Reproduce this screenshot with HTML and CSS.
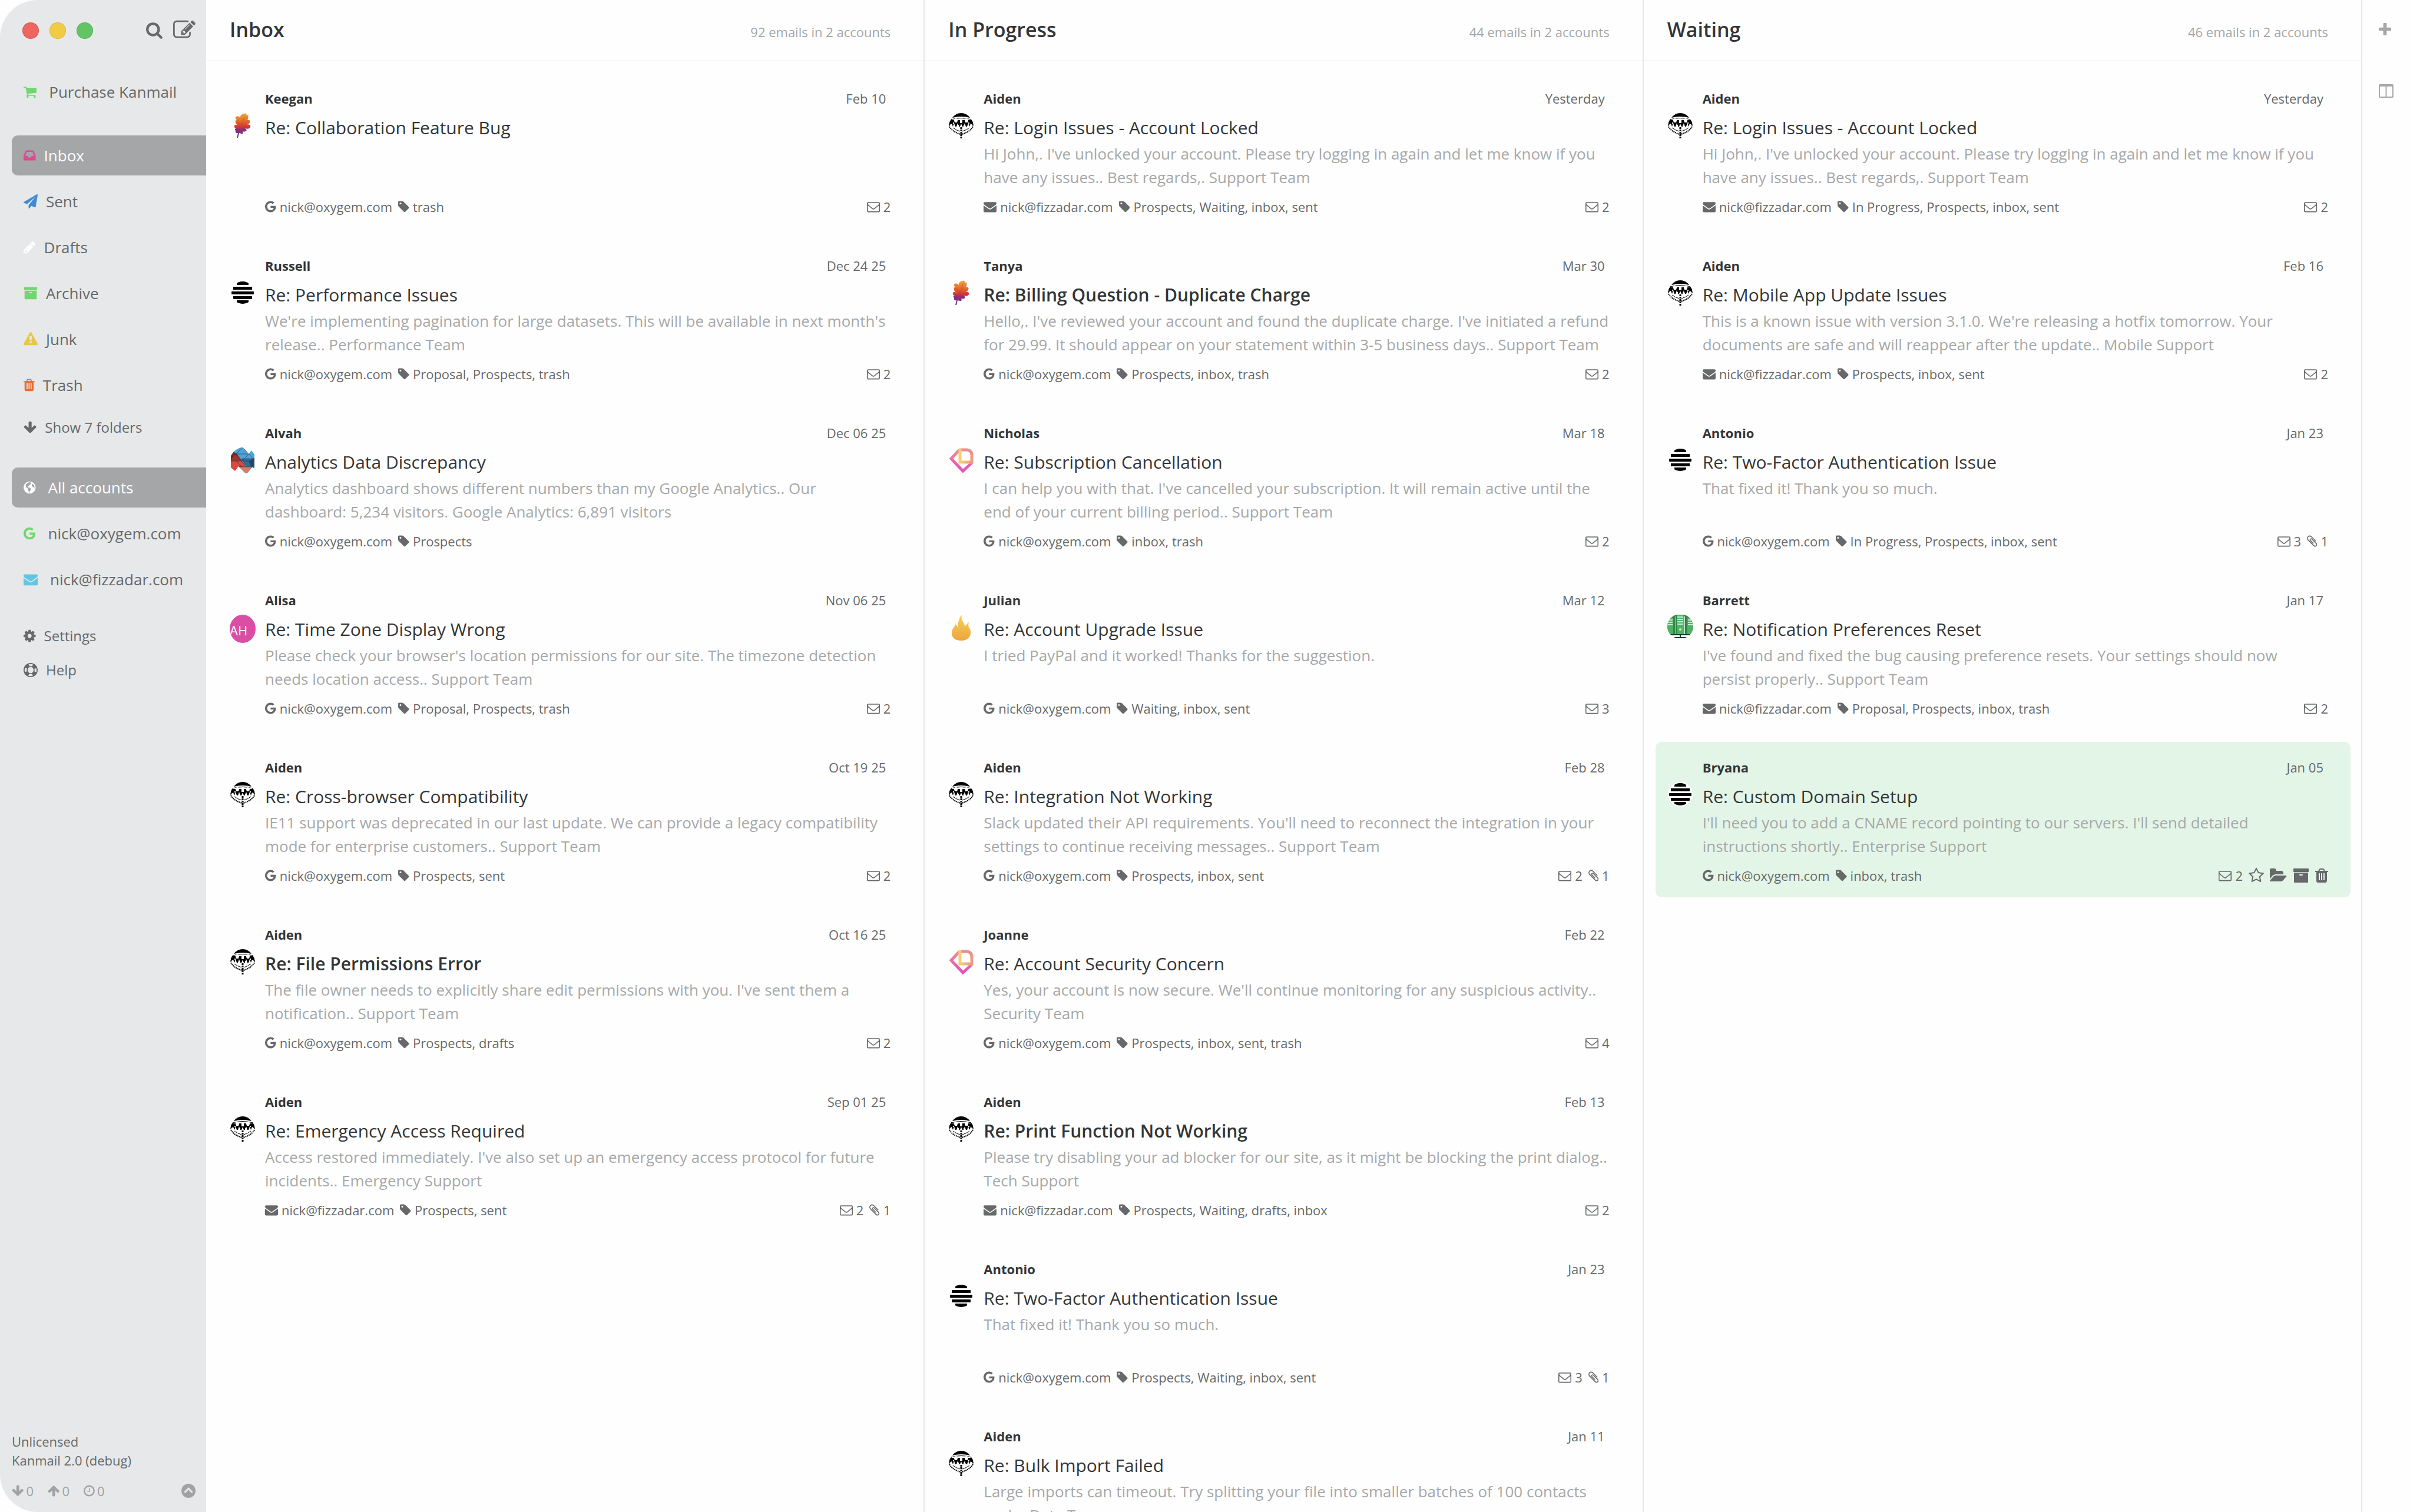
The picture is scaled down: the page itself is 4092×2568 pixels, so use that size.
FILE: index.html
```html
<!DOCTYPE html>
<html lang="en">
<head>
  <meta charset="UTF-8" />
  <meta name="viewport" content="width=device-width, initial-scale=1" />
  <title>Kanmail</title>
  <link rel="stylesheet" href="styles.css">
</head>
<body>
  <!-- Icon shapes, shared by the sidebar and the cards -->
  <svg class="sprite" aria-hidden="true">
    <defs>
      <path id="search" d="M1216 832q0-185-131.500-316.500t-316.500-131.500-316.500 131.500-131.500 316.500 131.500 316.500 316.500 131.500 316.500-131.500 131.500-316.500zm512 832q0 52-38 90t-90 38q-54 0-90-38l-343-342q-179 124-399 124-143 0-273.500-55.500t-225-150-150-225-55.500-273.500 55.500-273.500 150-225 225-150 273.500-55.500 273.500 55.500 225 150 150 225 55.500 273.500q0 220-124 399l343 343q37 37 37 90z"/>
      <path id="compose" d="M888 1184l116-116-152-152-116 116v56h96v96h56zm440-720q-16-16-33 1l-350 350q-17 17-1 33t33-1l350-350q17-17 1-33zm80 594v190q0 119-84.500 203.500t-203.500 84.500h-832q-119 0-203.500-84.500t-84.500-203.500v-832q0-119 84.500-203.500t203.500-84.500h832q63 0 117 25 15 7 18 23 3 17-9 29l-49 49q-14 14-32 8-23-6-45-6h-832q-66 0-113 47t-47 113v832q0 66 47 113t113 47h832q66 0 113-47t47-113v-126q0-13 9-22l64-64q15-15 35-7t20 29zm-96-738l288 288-672 672h-288v-288zm444 132l-92 92-288-288 92-92q28-28 68-28t68 28l152 152q28 28 28 68t-28 68z"/>
      <path id="cart" d="M704 1536q0 52-38 90t-90 38-90-38-38-90 38-90 90-38 90 38 38 90zm896 0q0 52-38 90t-90 38-90-38-38-90 38-90 90-38 90 38 38 90zm128-1088v512q0 24-16.500 42.500t-40.500 21.500l-1044 122q13 60 13 70 0 16-24 64h920q26 0 45 19t19 45-19 45-45 19h-1024q-26 0-45-19t-19-45q0-11 8-31.500t16-36 21.500-40 15.500-29.500l-177-823h-204q-26 0-45-19t-19-45 19-45 45-19h256q16 0 28.500 6.500t19.500 15.500 13 24.500 8 26 5.500 29.500 4.500 26h1201q26 0 45 19t19 45z"/>
      <path id="inbox" d="M1151 960h316q-1-3-2.500-8t-2.500-8l-212-496h-708l-212 496q-1 2-2.500 8t-2.500 8h316l95 192h320zm513 30v482q0 26-19 45t-45 19h-1408q-26 0-45-19t-19-45v-482q0-62 25-123l238-552q10-25 36.500-42t52.500-17h832q26 0 52.500 17t36.500 42l238 552q25 61 25 123z"/>
      <path id="plane" d="M1764 11q33 24 27 64l-256 1536q-5 29-32 45-14 8-31 8-11 0-24-5l-453-185-242 295q-18 23-49 23-13 0-22-4-19-7-30.500-23.500t-11.500-36.500v-349l864-1059-1069 925-395-162q-37-14-40-55-2-40 32-59l1664-960q15-9 32-9 20 0 36 11z"/>
      <path id="pencil" d="M491 1536l91-91-235-235-91 91v107h128v128h107zm523-928q0-22-22-22-10 0-17 7l-542 542q-7 7-7 17 0 22 22 22 10 0 17-7l542-542q7-7 7-17zm-54-192l416 416-832 832h-416v-416zm683 96q0 53-37 90l-166 166-416-416 166-165q36-38 90-38 53 0 91 38l235 234q37 39 37 91z"/>
      <path id="archive" d="M1088 832q0-26-19-45t-45-19h-256q-26 0-45 19t-19 45 19 45 45 19h256q26 0 45-19t19-45zm576-192v960q0 26-19 45t-45 19h-1408q-26 0-45-19t-19-45v-960q0-26 19-45t45-19h1408q26 0 45 19t19 45zm64-448v256q0 26-19 45t-45 19h-1536q-26 0-45-19t-19-45v-256q0-26 19-45t45-19h1536q26 0 45 19t19 45z"/>
      <path id="warning" d="M1024 1375v-190q0-14-9.500-23.500t-22.500-9.500h-192q-13 0-22.500 9.500t-9.500 23.500v190q0 14 9.500 23.500t22.500 9.500h192q13 0 22.500-9.500t9.500-23.500zm-2-374l18-459q0-12-10-19-13-11-24-11h-220q-11 0-24 11-10 7-10 21l17 457q0 10 10 16.500t24 6.500h185q14 0 23.500-6.500t10.500-16.500zm-14-934l768 1408q35 63-2 126-17 29-46.500 46t-63.500 17h-1536q-34 0-63.500-17t-46.500-46q-37-63-2-126l768-1408q17-31 47-49t65-18 65 18 47 49z"/>
      <path id="trash" d="M704 1376v-704q0-14-9-23t-23-9h-64q-14 0-23 9t-9 23v704q0 14 9 23t23 9h64q14 0 23-9t9-23zm256 0v-704q0-14-9-23t-23-9h-64q-14 0-23 9t-9 23v704q0 14 9 23t23 9h64q14 0 23-9t9-23zm256 0v-704q0-14-9-23t-23-9h-64q-14 0-23 9t-9 23v704q0 14 9 23t23 9h64q14 0 23-9t9-23zm-544-992h448l-48-117q-7-9-17-11h-317q-10 2-17 11zm928 32v64q0 14-9 23t-23 9h-96v948q0 83-47 143.500t-113 60.500h-832q-66 0-113-58.500t-47-141.500v-952h-96q-14 0-23-9t-9-23v-64q0-14 9-23t23-9h309l70-167q15-37 54-63t79-26h320q40 0 79 26t54 63l70 167h309q14 0 23 9t9 23z"/>
      <path id="arrow" d="M1675 832q0 53-37 90l-651 652q-39 37-91 37-53 0-90-37l-651-652q-38-36-38-90 0-53 38-91l74-75q39-37 91-37 53 0 90 37l294 294v-704q0-52 38-90t90-38h128q52 0 90 38t38 90v704l294-294q37-37 90-37 52 0 91 37l75 75q37 39 37 91z"/>
      <path id="google" d="M896 786h725q12 67 12 128 0 217-91 387.500t-259.500 266.500-386.500 96q-157 0-299-60.500t-245-163.500-163.500-245-60.500-299 60.500-299 163.500-245 245-163.500 299-60.500q300 0 515 201l-209 201q-123-119-306-119-129 0-238.500 65t-173.500 176.500-64 243.500 64 243.500 173.500 176.500 238.500 65q87 0 160-24t120-60 82-82 51.500-87 22.500-78h-436v-264z"/>
      <path id="envelope" d="M1792 710v794q0 66-47 113t-113 47h-1472q-66 0-113-47t-47-113v-794q44 49 101 87 362 246 497 345 57 42 92.500 65.500t94.500 48 110 24.500h2q51 0 110-24.500t94.500-48 92.500-65.500q170-123 498-345 57-39 100-87zm0-294q0 79-49 151t-122 123q-376 261-468 325-10 7-42.500 31t-54 38.500-52 32.500-57.500 27-50 9h-2q-23 0-50-9t-57.500-27-52-32.500-54-38.500-42.500-31q-91-64-262-182.500t-205-142.500q-62-42-117-115.500t-55-136.500q0-78 41.500-130t118.500-52h1472q65 0 112.500 47t47.500 113z"/>
      <path id="envelope-o" d="M1664 1504v-768q-32 36-69 66-268 206-426 338-51 43-83 67t-86.500 48.500-102.500 24.500h-2q-48 0-102.500-24.500t-86.500-48.500-83-67q-158-132-426-338-37-30-69-66v768q0 13 9.500 22.500t22.500 9.500h1472q13 0 22.500-9.500t9.500-22.500zm0-1051v-24.500l-.5-13-3-12.500-5.500-9-9-7.500-14-2.500h-1472q-13 0-22.500 9.500t-9.500 22.500q0 168 147 284 193 152 401 317 6 5 35 29.500t46 37.500 44.500 31.500 50.500 27.500 43 9h2q20 0 43-9t50.500-27.500 44.500-31.500 46-37.500 35-29.500q208-165 401-317 54-43 100.500-115.500t46.500-131.500zm128-37v1088q0 66-47 113t-113 47h-1472q-66 0-113-47t-47-113v-1088q0-66 47-113t113-47h1472q66 0 113 47t47 113z"/>
      <path id="tag" d="M576 448q0-53-37.500-90.500t-90.500-37.500-90.500 37.500-37.500 90.500 37.500 90.500 90.500 37.500 90.500-37.500 37.500-90.500zm1067 576q0 53-37 90l-491 492q-39 37-91 37-53 0-90-37l-715-716q-38-37-64.500-101t-26.500-117v-416q0-52 38-90t90-38h416q53 0 117 26.500t102 64.500l715 714q37 39 37 91z"/>
      <path id="clip" d="M1596 1385q0 117-79 196t-196 79q-135 0-235-100l-777-776q-113-115-113-271 0-159 110-270t269-111q158 0 273 113l605 606q10 10 10 22 0 16-30.500 46.500t-46.500 30.500q-13 0-23-10l-606-607q-79-77-181-77-106 0-179 75t-73 181q0 105 76 181l776 777q63 63 145 63 64 0 106-42t42-106q0-82-63-145l-581-581q-26-24-60-24-29 0-48 19t-19 48q0 32 25 59l410 410q10 10 10 22 0 16-31 47t-47 31q-12 0-22-10l-410-410q-63-61-63-149 0-82 57-139t139-57q88 0 149 63l581 581q100 98 100 235z"/>
      <path id="star" d="M1201 1004l306-297-422-62-189-382-189 382-422 62 306 297-73 421 378-199 377 199zm527-357q0 22-26 48l-363 354 86 500q1 7 1 20 0 50-41 50-19 0-40-12l-449-236-449 236q-22 12-40 12-21 0-31.500-14.500t-10.500-35.500q0-6 2-20l86-500-364-354q-25-27-25-48 0-37 56-46l502-73 225-455q19-41 49-41t49 41l225 455 502 73q56 9 56 46z"/>
      <path id="folder" d="M1815 952q0 31-31 66l-336 396q-43 51-120.500 86.500t-143.500 35.500h-1088q-34 0-60.500-13t-26.500-43q0-31 31-66l336-396q43-51 120.500-86.500t143.500-35.500h1088q34 0 60.500 13t26.500 43zm-343-344v160h-832q-94 0-197 47.500t-164 119.500l-337 396-5 6q0-4-.5-12.500t-.5-12.500v-960q0-92 66-158t158-66h320q92 0 158 66t66 158v32h544q92 0 158 66t66 158z"/>
      <path id="cog" d="M1152 896q0-106-75-181t-181-75-181 75-75 181 75 181 181 75 181-75 75-181zm512-109v222q0 12-8 23t-20 13l-185 28q-19 54-39 91 35 50 107 138 10 12 10 25t-9 23q-27 37-99 108t-94 71q-12 0-26-9l-138-108q-44 23-91 38-16 136-29 186-7 28-36 28h-222q-14 0-24.500-8.500t-11.500-21.500l-28-184q-49-16-90-37l-141 107q-10 9-25 9-14 0-25-11-126-114-165-168-7-10-7-23 0-12 8-23 15-21 51-66.500t54-70.500q-27-50-41-99l-183-27q-13-2-21-12.500t-8-23.500v-222q0-12 8-23t19-13l186-28q14-46 39-92-40-57-107-138-10-12-10-24 0-10 9-23 26-36 98.500-107.500t94.500-71.500q13 0 26 10l138 107q44-23 91-38 16-136 29-186 7-28 36-28h222q14 0 24.500 8.500t11.500 21.500l28 184q49 16 90 37l142-107q9-9 24-9 13 0 25 10 129 119 165 170 7 8 7 22 0 12-8 23-15 21-51 66.500t-54 70.500q26 50 41 98l183 28q13 2 21 12.500t8 23.500z"/>
      <g id="ring" fill="none" stroke="currentColor">
        <circle cx="896" cy="896" r="832" stroke-width="128"/>
        <circle cx="896" cy="896" r="448" stroke-width="128"/>
        <circle cx="896" cy="896" r="640" stroke-width="400" stroke-dasharray="540 465.300" stroke-dashoffset="-232"/>
      </g>
      <g id="globe">
        <circle cx="896" cy="896" r="768" fill="currentColor"/>
        <path fill="#a5a6a8" d="M620 330l190-90 250 10 60 110-110 60-40 140-120 60-60 110-140 20 20 110 110 40 170 40 130 120-40 180-130 120-40 210-80-30-40-240-90-150-30-170-130-70-80-160-30-200zM1200 420l150 60 130 190 40 240-110 20-90-120-130-40-20-180z"/>
      </g>
      <g id="clock" fill="none" stroke="currentColor">
        <circle cx="896" cy="896" r="672" stroke-width="192"/>
        <path d="M960 512v448H640" stroke-width="128"/>
      </g>
      <g id="chevron">
        <circle cx="896" cy="896" r="768" fill="currentColor"/>
        <path d="M470 1080l426-426 426 426" fill="none" stroke="#e6e8e9" stroke-width="200"/>
      </g>
      <rect id="plus-h" x="128" y="672" width="1408" height="384" rx="96"/>

      <linearGradient id="leaf-fill" x1="0" y1="0" x2="0" y2="1">
        <stop offset="0" stop-color="#f0a63c"/><stop offset=".25" stop-color="#e8792f"/>
        <stop offset=".55" stop-color="#d8372d"/><stop offset=".66" stop-color="#8a2f7c"/><stop offset="1" stop-color="#6a2f8f"/>
      </linearGradient>
      <linearGradient id="diamond-fill" x1="0" y1="0" x2="0" y2="1">
        <stop offset="0" stop-color="#e88f8b"/><stop offset="1" stop-color="#e64fbd"/>
      </linearGradient>
      <linearGradient id="square-fill" x1="0" y1="0" x2="1" y2="0">
        <stop offset="0" stop-color="#f7cf74"/><stop offset="1" stop-color="#ec9b86"/>
      </linearGradient>
      <linearGradient id="flame-fill" x1="0" y1="0" x2="0" y2="1">
        <stop offset="0" stop-color="#f5d254"/><stop offset="1" stop-color="#eea53f"/>
      </linearGradient>
      <clipPath id="hive-clip"><ellipse cx="22" cy="21" rx="19" ry="19"/></clipPath>
      <clipPath id="round-clip"><ellipse cx="22" cy="20" rx="22" ry="21"/></clipPath>
      <clipPath id="mosaic-clip"><path d="M2 14Q10 1 21 0Q26 2 32 11L37 5L42 12V34L38 37Q34 44 27 44L15 32L9 40L2 34Z"/></clipPath>

      <g id="leaf">
        <path fill="url(#leaf-fill)" d="M24 1Q28-1 29 4Q33 3 31 8Q32 11 29 12Q36 11 34 16Q33 19 29 19Q37 20 35 24Q33 28 26 26Q31 29 27 31Q24 32 22 31Q24 36 20 35L16 34L14 42H12L14 34Q9 35 10 30Q7 27 11 26Q7 25 8 21Q10 19 14 21Q9 18 10 14Q9 12 12 12Q8 8 11 6Q15 4 18 8Q17 3 24 1Z"/>
        <path fill="none" stroke="#b0402f" stroke-opacity=".5" d="M25 6L17 34M20 20l-8-6M19 26l13-4"/>
      </g>
      <g id="hive">
        <circle cx="22" cy="21" r="21" fill="#fff"/>
        <path clip-path="url(#hive-clip)" d="M12 2h20v6H12zM6 11h32v5H6zM3 19h38v5H3zM6 27h32v5H6zM12 34h20v7H12z"/>
      </g>
      <g id="mosaic" clip-path="url(#mosaic-clip)" stroke="#333" stroke-opacity=".6">
        <path fill="#4fa3da" d="M0 0h44v20L22 32z"/>
        <path fill="#2e6d99" d="M20 19h24v10l-14 6z"/>
        <path fill="#1f4c6b" d="M33 24l11-8v20l-8-4z"/>
        <path fill="#7d2b27" d="M0 4l12 7 8 12H0z"/>
        <path fill="#a63530" d="M10 11l11 12-10 8-11-8z"/>
        <path fill="#d64a3f" d="M0 23h20l8 10H16l-6 9H0z"/>
        <path fill="#e2756c" d="M16 33h22l-10 12z"/>
        <path fill="none" d="M11 11h22M21 0l-10 11 10 12 12-12zM33 11l9 11M20 23h22M11 23l10 10"/>
      </g>
      <g id="diamond" fill="none" stroke-width="5">
        <path stroke="url(#diamond-fill)" d="M19 4L5 19l20 21 15-14"/>
        <path stroke="#e88f8b" d="M19 4h13q8 1 8 9"/>
        <path stroke="url(#square-fill)" d="M20 2v23h20V10"/>
      </g>
      <path id="flame" fill="url(#flame-fill)" d="M24 0q-3 5 0 10 4 6 4 10 3-4 8-8-3 4-1 9 4 6 3 11-2 12-16 12T6 33q-1-6 4-12 2-3 1-6 4 3 6 8-2-6 1-13 2-8 6-10z"/>
      <g id="server" clip-path="url(#round-clip)">
        <path fill="#2f8a4a" d="M0 0h44v33H0z"/>
        <path fill="#4fb266" d="M0 6h10v27H0zM34 6h10v27H34zM16 0h12v33H16z"/>
        <path stroke="#c9ecd0" stroke-width="2" d="M17 4h10M17 8h10M17 12h10M17 16h10M0 9h9M0 13h9M0 17h9M35 9h9M35 13h9M35 17h9"/>
        <path fill="#fff" d="M14 3h1v30h-1zM29 3h1v30h-1zM0 33h44v8H0z"/>
        <circle cx="22" cy="25" r="2" fill="#c9ecd0"/>
        <path stroke="#1c3b2b" stroke-width="2" d="M2 34h40M8 39h28M22 34v5"/>
      </g>
      <g id="parachute">
        <path d="M7 8Q13 0 22 0t15 8q-15-4-30 0z"/>
        <path fill="none" stroke="#000" d="M5 11q17-5 34 0M2 22q-1-7 4-12M42 22q1-7-4-12"/>
        <path d="M4 12h6l1 4h4l1-4h4v5h4v-5h4l1 4h4l1-4h6l3 9-5-3-2 5-2-6-2 6h-2l-2-6-2 6h-2l-2-5-2 5h-2l-2-6-2 6h-2l-2-6-2 6-2-5-5 3z"/>
        <path fill="#fff" d="M16 20h2v3h-2zM26 20h2v3h-2zM8 16h2v2H8zM34 16h2v2h-2z"/>
        <circle cx="13" cy="12" r="3" fill="#fff"/>
        <circle cx="31" cy="12" r="3" fill="#fff"/>
        <circle cx="22" cy="12" r="2" fill="#fff"/>
        <path fill="none" stroke="#000" stroke-width="2" stroke-dasharray="2 1" d="M2 23q5 9 19 13M42 23q-5 9-19 13"/>
        <path fill="none" stroke="#000" d="M8 25q5 4 12 6M36 25q-5 4-12 6"/>
        <path fill="none" stroke="#000" stroke-width="3" stroke-dasharray="3 1" d="M22 24v20"/>
      </g>
    </defs>
  </svg>

  <nav class="sidebar">
    <div class="titlebar">
      <div class="lights">
        <button class="light red" aria-label="Close"></button>
        <button class="light yellow" aria-label="Minimise"></button>
        <button class="light green" aria-label="Zoom"></button>
      </div>
      <div class="tools">
        <button aria-label="Search"><svg class="icon" viewBox="64 0 1664 1792"><use href="#search"/></svg></button>
        <button class="compose" aria-label="Compose"><svg class="icon" viewBox="0 0 1792 1792"><use href="#compose"/></svg></button>
      </div>
    </div>

    <a class="row wide" href="#"><svg class="icon bright" viewBox="64 0 1664 1792"><use href="#cart"/></svg>Purchase Kanmail</a>

    <div class="folders">
      <a class="row active" href="#"><svg class="icon pink" viewBox="128 0 1536 1792"><use href="#inbox"/></svg>Inbox</a>
      <a class="row" href="#"><svg class="icon blue" viewBox="0 0 1792 1792"><use href="#plane"/></svg>Sent</a>
      <a class="row" href="#"><svg class="icon white" viewBox="128 0 1536 1792"><use href="#pencil"/></svg>Drafts</a>
      <a class="row" href="#"><svg class="icon bright" viewBox="0 0 1792 1792"><use href="#archive"/></svg>Archive</a>
      <a class="row" href="#"><svg class="icon gold" viewBox="0 0 1792 1792"><use href="#warning"/></svg>Junk</a>
      <a class="row" href="#"><svg class="icon orange" viewBox="192 0 1408 1792"><use href="#trash"/></svg>Trash</a>
      <button class="row small"><svg class="icon" viewBox="64 0 1664 1792"><use href="#arrow"/></svg>Show 7 folders</button>
    </div>

    <div class="accounts">
      <a class="row wide active" href="#"><svg class="icon" viewBox="128 0 1536 1792"><use href="#globe"/></svg>All accounts</a>
      <a class="row wide" href="#"><svg class="icon bright" viewBox="128 0 1536 1792"><use href="#google"/></svg>nick@oxygem.com</a>
      <a class="row wide" href="#"><svg class="icon sky" viewBox="0 0 1792 1792"><use href="#envelope"/></svg>nick@fizzadar.com</a>
    </div>

    <div class="extras">
      <a class="row small" href="#"><svg class="icon" viewBox="128 0 1536 1792"><use href="#cog"/></svg>Settings</a>
      <a class="row small" href="#"><svg class="icon" viewBox="0 0 1792 1792"><use href="#ring"/></svg>Help</a>
    </div>

    <div class="status">
      <div>Unlicensed</div>
      <div>Kanmail 2.0 (debug)</div>
      <div class="counters">
        <span><svg class="icon" viewBox="64 0 1664 1792"><use href="#arrow"/></svg>0</span>
        <span><svg class="icon" viewBox="64 0 1664 1792"><use href="#arrow" transform="matrix(1 0 0 -1 0 1792)"/></svg>0</span>
        <span><svg class="icon" viewBox="128 0 1536 1792"><use href="#clock"/></svg>0</span>
        <button aria-label="Show log"><svg class="icon" viewBox="128 0 1536 1792"><use href="#chevron"/></svg></button>
      </div>
    </div>
  </nav>

  <main class="board" id="board"></main>

  <aside class="strip">
    <button aria-label="Add column"><svg class="icon" viewBox="128 160 1408 1408"><use href="#plus-h"/><use href="#plus-h" transform="rotate(90 832 864)"/></svg></button>
    <button class="layout" aria-label="Columns"><svg class="icon" viewBox="0 0 26 24"><path d="M2 1h22q1 0 1 1v20q0 1-1 1H2q-1 0-1-1V2q0-1 1-1zM13 2v20" fill="none" stroke="currentColor" stroke-width="2"/><path d="M1 1h24v3H1z"/></svg></button>
  </aside>

  <script>
    const VIEWS = {
      google: '128 0 1536 1792',
      envelope: '0 0 1792 1792',
      'envelope-o': '0 0 1792 1792',
      tag: '128 0 1536 1792',
      clip: '192 0 1408 1792',
      star: '64 0 1664 1792',
      folder: '0 0 1856 1792',
      archive: '0 0 1792 1792',
      trash: '192 0 1408 1792'
    };

    const OXYGEM = 'nick@oxygem.com';
    const FIZZADAR = 'nick@fizzadar.com';

    const columns = [
      { name: 'Inbox', count: 92, threads: [
        { from: 'Keegan', date: 'Feb 10', avatar: 'leaf', subject: 'Re: Collaboration Feature Bug', text: '', account: OXYGEM, tags: 'trash', emails: 2 },
        { from: 'Russell', date: 'Dec 24 25', avatar: 'hive', subject: 'Re: Performance Issues', text: "We're implementing pagination for large datasets. This will be available in next month's release.. Performance Team", account: OXYGEM, tags: 'Proposal, Prospects, trash', emails: 2 },
        { from: 'Alvah', date: 'Dec 06 25', avatar: 'mosaic', subject: 'Analytics Data Discrepancy', text: 'Analytics dashboard shows different numbers than my Google Analytics.. Our dashboard: 5,234 visitors. Google Analytics: 6,891 visitors', account: OXYGEM, tags: 'Prospects', emails: 0 },
        { from: 'Alisa', date: 'Nov 06 25', avatar: 'AH', subject: 'Re: Time Zone Display Wrong', text: "Please check your browser's location permissions for our site. The timezone detection needs location access.. Support Team", account: OXYGEM, tags: 'Proposal, Prospects, trash', emails: 2 },
        { from: 'Aiden', date: 'Oct 19 25', avatar: 'parachute', subject: 'Re: Cross-browser Compatibility', text: 'IE11 support was deprecated in our last update. We can provide a legacy compatibility mode for enterprise customers.. Support Team', account: OXYGEM, tags: 'Prospects, sent', emails: 2 },
        { from: 'Aiden', date: 'Oct 16 25', avatar: 'parachute', unread: true, subject: 'Re: File Permissions Error', text: "The file owner needs to explicitly share edit permissions with you. I've sent them a notification.. Support Team", account: OXYGEM, tags: 'Prospects, drafts', emails: 2 },
        { from: 'Aiden', date: 'Sep 01 25', avatar: 'parachute', subject: 'Re: Emergency Access Required', text: "Access restored immediately. I've also set up an emergency access protocol for future incidents.. Emergency Support", account: FIZZADAR, tags: 'Prospects, sent', emails: 2, files: 1 }
      ] },
      { name: 'In Progress', count: 44, threads: [
        { from: 'Aiden', date: 'Yesterday', avatar: 'parachute', subject: 'Re: Login Issues - Account Locked', text: "Hi John,. I've unlocked your account. Please try logging in again and let me know if you have any issues.. Best regards,. Support Team", account: FIZZADAR, tags: 'Prospects, Waiting, inbox, sent', emails: 2 },
        { from: 'Tanya', date: 'Mar 30', avatar: 'leaf', unread: true, subject: 'Re: Billing Question - Duplicate Charge', text: "Hello,. I've reviewed your account and found the duplicate charge. I've initiated a refund for 29.99. It should appear on your statement within 3-5 business days.. Support Team", account: OXYGEM, tags: 'Prospects, inbox, trash', emails: 2 },
        { from: 'Nicholas', date: 'Mar 18', avatar: 'diamond', subject: 'Re: Subscription Cancellation', text: "I can help you with that. I've cancelled your subscription. It will remain active until the end of your current billing period.. Support Team", account: OXYGEM, tags: 'inbox, trash', emails: 2 },
        { from: 'Julian', date: 'Mar 12', avatar: 'flame', subject: 'Re: Account Upgrade Issue', text: 'I tried PayPal and it worked! Thanks for the suggestion.', account: OXYGEM, tags: 'Waiting, inbox, sent', emails: 3 },
        { from: 'Aiden', date: 'Feb 28', avatar: 'parachute', subject: 'Re: Integration Not Working', text: "Slack updated their API requirements. You'll need to reconnect the integration in your settings to continue receiving messages.. Support Team", account: OXYGEM, tags: 'Prospects, inbox, sent', emails: 2, files: 1 },
        { from: 'Joanne', date: 'Feb 22', avatar: 'diamond', subject: 'Re: Account Security Concern', text: "Yes, your account is now secure. We'll continue monitoring for any suspicious activity.. Security Team", account: OXYGEM, tags: 'Prospects, inbox, sent, trash', emails: 4 },
        { from: 'Aiden', date: 'Feb 13', avatar: 'parachute', unread: true, subject: 'Re: Print Function Not Working', text: 'Please try disabling your ad blocker for our site, as it might be blocking the print dialog.. Tech Support', account: FIZZADAR, tags: 'Prospects, Waiting, drafts, inbox', emails: 2 },
        { from: 'Antonio', date: 'Jan 23', avatar: 'hive', subject: 'Re: Two-Factor Authentication Issue', text: 'That fixed it! Thank you so much.', account: OXYGEM, tags: 'Prospects, Waiting, inbox, sent', emails: 3, files: 1 },
        { from: 'Aiden', date: 'Jan 11', avatar: 'parachute', subject: 'Re: Bulk Import Failed', text: 'Large imports can timeout. Try splitting your file into smaller batches of 100 contacts each.. Data Team', account: OXYGEM, tags: 'Prospects, inbox', emails: 2 }
      ] },
      { name: 'Waiting', count: 46, threads: [
        { from: 'Aiden', date: 'Yesterday', avatar: 'parachute', subject: 'Re: Login Issues - Account Locked', text: "Hi John,. I've unlocked your account. Please try logging in again and let me know if you have any issues.. Best regards,. Support Team", account: FIZZADAR, tags: 'In Progress, Prospects, inbox, sent', emails: 2 },
        { from: 'Aiden', date: 'Feb 16', avatar: 'parachute', subject: 'Re: Mobile App Update Issues', text: "This is a known issue with version 3.1.0. We're releasing a hotfix tomorrow. Your documents are safe and will reappear after the update.. Mobile Support", account: FIZZADAR, tags: 'Prospects, inbox, sent', emails: 2 },
        { from: 'Antonio', date: 'Jan 23', avatar: 'hive', subject: 'Re: Two-Factor Authentication Issue', text: 'That fixed it! Thank you so much.', account: OXYGEM, tags: 'In Progress, Prospects, inbox, sent', emails: 3, files: 1 },
        { from: 'Barrett', date: 'Jan 17', avatar: 'server', subject: 'Re: Notification Preferences Reset', text: "I've found and fixed the bug causing preference resets. Your settings should now persist properly.. Support Team", account: FIZZADAR, tags: 'Proposal, Prospects, inbox, trash', emails: 2 },
        { from: 'Bryana', date: 'Jan 05', avatar: 'hive', hover: true, subject: 'Re: Custom Domain Setup', text: "I'll need you to add a CNAME record pointing to our servers. I'll send detailed instructions shortly.. Enterprise Support", account: OXYGEM, tags: 'inbox, trash', emails: 2 }
      ] }
    ];

    function icon(name) {
      return `<svg class="icon" viewBox="${VIEWS[name]}"><use href="#${name}"/></svg>`;
    }

    function avatar(name) {
      if (name === 'AH') return '<div class="avatar initials">AH</div>';
      return `<svg class="avatar" viewBox="0 0 44 48"><use href="#${name}"/></svg>`;
    }

    function actions() {
      return ['star', 'folder', 'archive', 'trash']
        .map(name => `<button class="action" aria-label="${name}">${icon(name)}</button>`)
        .join('');
    }

    function card(t) {
      return `
        <article class="card ${t.hover ? 'hover' : ''}">
          ${avatar(t.avatar)}
          <div class="body">
            <div class="top"><strong>${t.from}</strong><time>${t.date}</time></div>
            <h3 class="${t.unread ? 'unread' : ''}">${t.subject}</h3>
            <p>${t.text}</p>
            <div class="meta">
              <span>${icon(t.account === OXYGEM ? 'google' : 'envelope')}${t.account}</span>
              <span class="tags">${icon('tag')}${t.tags}</span>
              ${t.emails ? `<span>${icon('envelope-o')}${t.emails}</span>` : ''}
              ${t.files ? `<span>${icon('clip')}${t.files}</span>` : ''}
              ${t.hover ? actions() : ''}
            </div>
          </div>
        </article>`;
    }

    document.getElementById('board').innerHTML = columns.map(col => `
      <section class="column">
        <header><h2>${col.name}</h2><span>${col.count} emails in 2 accounts</span></header>
        <div class="threads">${col.threads.map(card).join('')}</div>
      </section>`).join('');
  </script>
</body>
</html>
```
FILE: styles.css
```css
* {
  box-sizing: border-box;
}

body {
  margin: 0;
  height: 100vh;
  display: flex;
  overflow: hidden;
  background: #fefefe;
  font-family: 'Open Sans', sans-serif;
  font-size: 22px;
  line-height: 32px;
  color: #666869;
}

h2, h3, p {
  margin: 0;
}

a {
  color: inherit;
  text-decoration: none;
}

button {
  padding: 0;
  border: none;
  background: none;
  font: inherit;
  color: inherit;
  cursor: pointer;
}

.sprite {
  position: absolute;
  width: 0;
  height: 0;
}

.icon {
  display: block;
  flex: none;
  height: 1em;
  fill: currentColor;
}

/* Sidebar */

.sidebar {
  flex: none;
  width: 350px;
  display: flex;
  flex-direction: column;
  background: #e6e8e9;
  border-radius: 64px 0 0 64px;
}

.titlebar {
  display: flex;
  justify-content: space-between;
  align-items: center;
  height: 104px;
  margin-bottom: 18px;
  padding: 0 18px 0 38px;
}

.lights, .tools {
  display: flex;
  align-items: center;
  gap: 18px;
}

.light {
  width: 28px;
  height: 28px;
  border-radius: 50%;
  border: 1px solid rgba(0, 0, 0, 0.1);
}

.red { background: #ed6660; }
.yellow { background: #f2cb45; }
.green { background: #63c466; }

.tools {
  font-size: 30px;
  padding-bottom: 2px;
}

.compose {
  font-size: 38px;
}

.row {
  display: flex;
  align-items: center;
  gap: 14px;
  width: 100%;
  height: 68px;
  padding-left: 40px;
  font-size: 26px;
}

.row .icon {
  font-size: 24px;
}

.row.wide {
  gap: 21px;
}

.row.small {
  height: 56px;
  font-size: 24px;
}

.row.active {
  width: auto;
  margin-left: 20px;
  padding-left: 20px;
  border-radius: 10px 0 0 10px;
  background: #a5a6a8;
  color: #fff;
}

.bright { color: #70d670; }
.pink { color: #dc4a8f; }
.blue { color: #3f8bd2; }
.white { color: #fff; }
.gold { color: #e8c746; }
.orange { color: #e86c30; }
.sky { color: #62c6e2; }

.folders, .accounts {
  display: flex;
  flex-direction: column;
  gap: 10px;
  margin-top: 40px;
}

.extras {
  display: flex;
  flex-direction: column;
  gap: 2px;
  margin-top: 34px;
}

.status {
  margin-top: auto;
  padding: 0 18px 20px 20px;
}

.counters {
  display: flex;
  align-items: center;
  gap: 24px;
  margin-top: 20px;
  color: #a0a2a3;
}

.counters span {
  display: flex;
  align-items: center;
  gap: 4px;
}

.counters button {
  margin-left: auto;
  font-size: 28px;
}

/* Columns */

.board {
  flex: 1;
  display: flex;
  min-width: 0;
}

.column {
  flex: 1;
  min-width: 0;
  border-right: 2px solid #e5e7e8;
}

.column header {
  display: flex;
  justify-content: space-between;
  align-items: baseline;
  height: 104px;
  padding: 25px 56px 0 40px;
  border-bottom: 2px solid #f5f6f6;
  color: #a4a6a7;
}

h2 {
  font-size: 34px;
  line-height: 50px;
  font-weight: 600;
  color: #333536;
}

.threads {
  display: flex;
  flex-direction: column;
  gap: 20px;
  padding: 20px 18px 0 20px;
}

.card {
  display: flex;
  gap: 16px;
  padding: 27px 38px 21px 20px;
  border-radius: 10px;
}

.card.hover {
  background: #e3f5e7;
}

.avatar {
  flex: none;
  width: 44px;
  height: 48px;
  margin-top: 41px;
}

.initials {
  overflow: hidden;
  border-radius: 50%;
  background: #d94fa3;
  color: #fff;
  line-height: 52px;
}

.body {
  flex: 1;
  min-width: 0;
}

.top {
  display: flex;
  justify-content: space-between;
  padding-right: 8px;
  margin-bottom: 10px;
}

.top strong {
  font-weight: 700;
  color: #333536;
}

h3 {
  font-size: 30px;
  line-height: 48px;
  font-weight: 400;
  color: #333536;
}

h3.unread {
  font-weight: 600;
}

.card p {
  min-height: 80px;
  font-size: 26px;
  line-height: 40px;
  color: #a6a8a9;
}

.meta {
  display: flex;
  align-items: center;
  gap: 10px;
  margin-top: 14px;
}

.meta span {
  display: flex;
  align-items: center;
  gap: 6px;
}

.meta .tags {
  margin-right: auto;
}

.action {
  font-size: 28px;
}

/* Right hand strip */

.strip {
  flex: none;
  width: 81px;
  display: flex;
  flex-direction: column;
  align-items: flex-start;
  gap: 83px;
  padding: 39px 0 0 28px;
  color: #a4a6a7;
}

.strip .icon {
  font-size: 21px;
}

.strip .layout .icon {
  font-size: 23px;
}
```
